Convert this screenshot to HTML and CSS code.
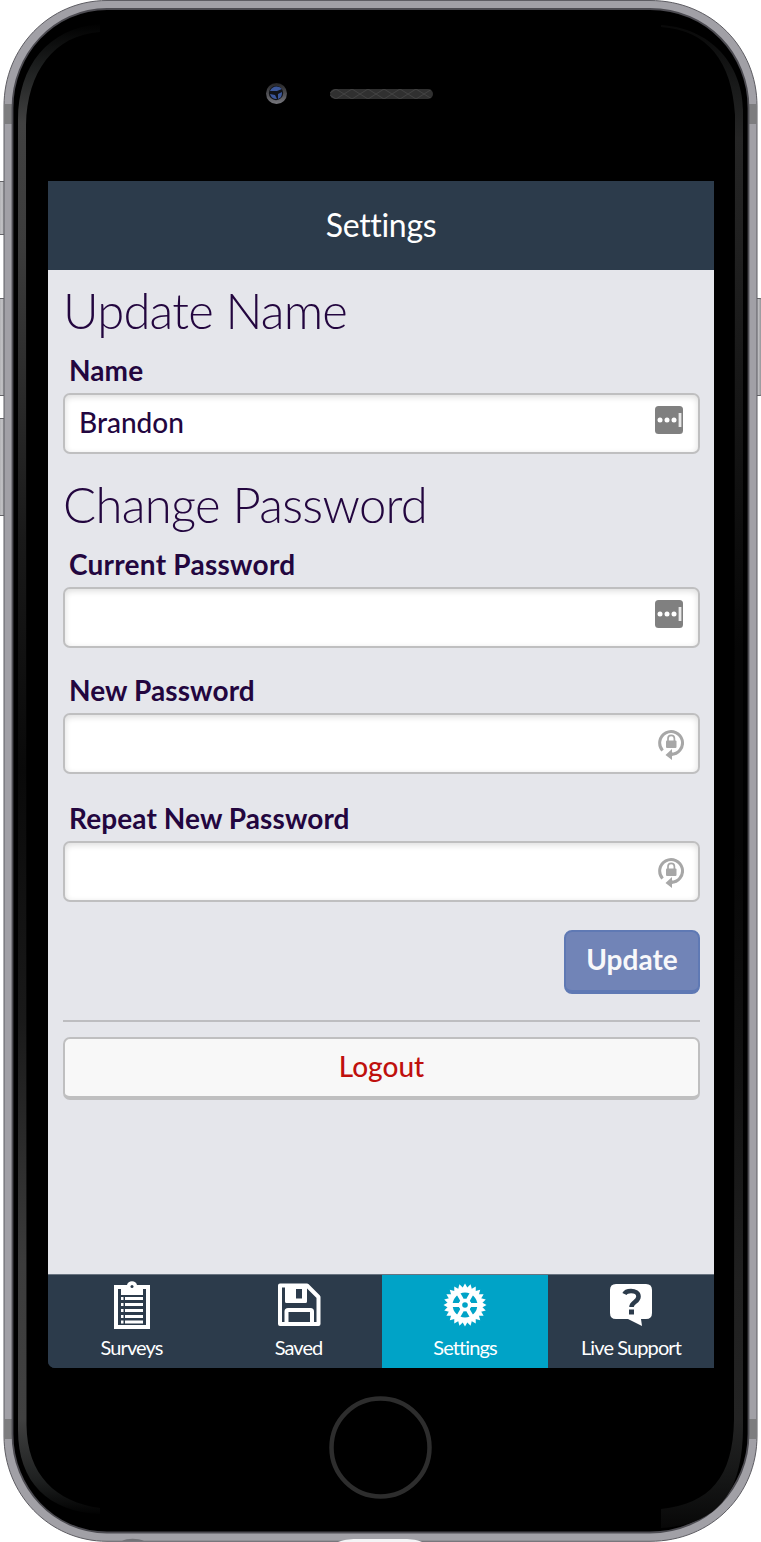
FILE: index.html
```html
<!DOCTYPE html>
<html lang="en">
<head>
<meta charset="utf-8">
<title>Settings</title>
<link rel="stylesheet" href="styles.css">
</head>
<body>
<div class="device">
  <svg class="frame" viewBox="0 0 761 1542" aria-hidden="true">
    <defs>
      <linearGradient id="glowL" x1="0" y1="0" x2="0" y2="1542" gradientUnits="userSpaceOnUse">
        <stop offset=".015" stop-color="#000"/><stop offset=".045" stop-color="#1e2020"/><stop offset=".08" stop-color="#414141"/>
        <stop offset=".16" stop-color="#3c3c3c"/><stop offset=".35" stop-color="#191919"/><stop offset=".5" stop-color="#090909"/>
        <stop offset=".66" stop-color="#191919"/><stop offset=".82" stop-color="#3c3c3c"/><stop offset=".92" stop-color="#414141"/>
        <stop offset=".96" stop-color="#1e2020"/><stop offset=".983" stop-color="#000"/>
      </linearGradient>
      <linearGradient id="glowR" x1="0" y1="0" x2="0" y2="1542" gradientUnits="userSpaceOnUse">
        <stop offset=".015" stop-color="#080808"/><stop offset=".06" stop-color="#1a1b1b"/><stop offset=".09" stop-color="#252525"/>
        <stop offset=".16" stop-color="#202020"/><stop offset=".3" stop-color="#121212"/><stop offset=".42" stop-color="#060606"/>
        <stop offset=".55" stop-color="#060606"/><stop offset=".7" stop-color="#121212"/><stop offset=".83" stop-color="#202020"/>
        <stop offset=".92" stop-color="#232323"/><stop offset=".96" stop-color="#151616"/><stop offset=".99" stop-color="#080808"/>
      </linearGradient>
      <linearGradient id="key" x1="0" x2="1" y1="0" y2="0"><stop offset="0" stop-color="#9b9b9f"/><stop offset=".5" stop-color="#c3c3c6"/><stop offset="1" stop-color="#77777b"/></linearGradient>
      <linearGradient id="lensRim" x1="0" x2="0" y1="0" y2="1"><stop offset="0" stop-color="#242426"/><stop offset="1" stop-color="#77777d"/></linearGradient>
      <pattern id="mesh" width="16" height="10" patternUnits="userSpaceOnUse" y="89"><path d="M0 0l16 10M16 0L0 10" stroke="#424242" stroke-width="1"/></pattern>
    </defs>
    <g fill="url(#key)" stroke="#646468" stroke-width="1">
      <rect x="-3" y="181.500" width="10" height="53" rx="3"/>
      <rect x="-3" y="298.500" width="10" height="97" rx="3"/>
      <rect x="-3" y="418.500" width="10" height="97" rx="3"/>
      <rect x="753" y="298.500" width="10" height="97" rx="3"/>
    </g>
    <path d="M107 .5H650C712 .5 757 48 757 106V1436C757 1494 712 1541.300 650 1541.300H107C49 1541.300 4 1494 4 1436V106C4 48 49 .5 107 .5Z" fill="#a1a0a6" stroke="#5d5c62"/>
    <path d="M4 104h9v20H4zM748 104h9v20h-9zM4 1419h9v20H4zM748 1419h9v20h-9z" fill="#7d7d7f"/>
    <path d="M107 9H650C707 9 748.500 54 748.500 108V1434C748.500 1488 707 1532.500 650 1532.500H107C54 1532.500 12.500 1488 12.500 1434V108C12.500 54 54 9 107 9Z" fill="#000" stroke="#4c4b51" stroke-width="1.800"/>
    <path d="M100 24C48 28 18 66 18 120V1430C18 1482 48 1512 100 1514V1508C56 1502 27 1475 26.500 1425L26 125C27 72 54 35 100 32Z" fill="url(#glowL)"/>
    <path d="M661 25C718 29 743 72 743 110V1423C744 1495 716 1525 661 1528V1509C710 1504 733 1477 734 1420L735 115C732 62 708 30 661 27Z" fill="url(#glowR)"/>
    <circle cx="276.500" cy="93.500" r="10.500" fill="url(#lensRim)"/>
    <circle cx="276" cy="93" r="7.200" fill="#111318"/>
    <path d="M270 91c2-5 8-6 12-2l-5 2zM270 94l5 1 2 4c-4 0-6-2-7-5zM278 94l4-2c0 4-1 6-4 7z" fill="#3b579a"/>
    <rect x="330" y="89" width="103" height="10" rx="5" fill="#303030"/>
    <rect x="330" y="89" width="103" height="10" rx="5" fill="url(#mesh)"/>
    <circle cx="380.500" cy="1447.500" r="49" fill="#000" stroke="#2d2d2d" stroke-width="4.500"/>
    <path d="M338 1542c8-3 14-3 20-3h44c7 0 13 0 20 3z" fill="#f4f4f6"/>
    <path d="M122 1541c5-3 16-3 22 0z" fill="#727277"/>
  </svg>

  <main class="screen">
    <header class="topbar">Settings</header>
    <form class="content">
      <h2 class="title">Update Name</h2>
      <label class="label" for="name">Name</label>
      <div class="field">
        <input class="input" id="name" type="text" value="Brandon">
        <svg class="manager" viewBox="0 0 28 28"><rect width="28" height="28" rx="3.500" fill="#808080"/><g fill="#fff"><circle cx="5" cy="14" r="2.500"/><circle cx="12" cy="14" r="2.500"/><circle cx="19" cy="14" r="2.500"/></g><path d="M25 7v14" stroke="#e9e9e9" stroke-width="2.800"/></svg>
      </div>
      <h2 class="title title-second">Change Password</h2>
      <label class="label label-current" for="current">Current Password</label>
      <div class="field">
        <input class="input" id="current" type="password">
        <svg class="manager" viewBox="0 0 28 28"><rect width="28" height="28" rx="3.500" fill="#808080"/><g fill="#fff"><circle cx="5" cy="14" r="2.500"/><circle cx="12" cy="14" r="2.500"/><circle cx="19" cy="14" r="2.500"/></g><path d="M25 7v14" stroke="#e9e9e9" stroke-width="2.800"/></svg>
      </div>
      <label class="label label-new" for="new">New Password</label>
      <div class="field">
        <input class="input" id="new" type="password">
        <svg class="generate" viewBox="0 0 26 33"><path d="M4.600 22.500A11.400 11.400 0 1 1 13 26.300" fill="none" stroke="#a7a7a7" stroke-width="3"/><path d="M7.500 27l6.500-6v3.500l3 1.500-3 2v4z" fill="#a7a7a7"/><rect x="8" y="12.500" width="10.500" height="7.500" rx="1" fill="#a7a7a7"/><path d="M10 13v-2.500a3.200 3.200 0 0 1 6.400 0V13" fill="none" stroke="#a7a7a7" stroke-width="1.700"/></svg>
      </div>
      <label class="label label-repeat" for="repeat">Repeat New Password</label>
      <div class="field">
        <input class="input" id="repeat" type="password">
        <svg class="generate" viewBox="0 0 26 33"><path d="M4.600 22.500A11.400 11.400 0 1 1 13 26.300" fill="none" stroke="#a7a7a7" stroke-width="3"/><path d="M7.500 27l6.500-6v3.500l3 1.500-3 2v4z" fill="#a7a7a7"/><rect x="8" y="12.500" width="10.500" height="7.500" rx="1" fill="#a7a7a7"/><path d="M10 13v-2.500a3.200 3.200 0 0 1 6.400 0V13" fill="none" stroke="#a7a7a7" stroke-width="1.700"/></svg>
      </div>
      <button class="update" type="button">Update</button>
      <hr class="rule">
      <button class="logout" type="button">Logout</button>
    </form>
    <nav class="tabs">
      <a class="tab"><svg class="icon" viewBox="0 0 44 50">
        <path d="M6 7h32v40H6z" fill="none" stroke="#fff" stroke-width="4"/>
        <path d="M11 9h5c1-2 1-3 1-4a5.200 5.200 0 0 1 10 0c0 1 0 2 1 4h5v6H11z" fill="#fff"/><circle cx="22" cy="6.500" r="1.500" fill="#2c3b4b"/>
        <path d="M11 18.500h22M11 24.500h22M11 30.500h22M11 36.500h22M11 42h22" stroke="#fff" stroke-width="2.800" stroke-dasharray="2.500 1.500 18"/>
      </svg><span class="tab-label">Surveys</span></a>
      <a class="tab"><svg class="icon" viewBox="0 0 44 50">
        <path d="M3 5.500h27L41.500 17v27H3z" fill="none" stroke="#fff" stroke-width="4" stroke-linejoin="round"/>
        <path d="M8 5h22v16.500q0 1.500-1.500 1.500h-19Q8 23 8 21.500zM19 9v9.500h6V9z" fill="#fff" fill-rule="evenodd"/>
        <path d="M9.500 44V31.500q0-1.500 1.500-1.500h22.500q1.500 0 1.500 1.500V44" fill="none" stroke="#fff" stroke-width="4"/>
      </svg><span class="tab-label">Saved</span></a>
      <a class="tab tab-active"><svg class="icon" viewBox="0 0 44 50">
        <defs><path id="tri" d="M0-21.500L18.620 10.750H-18.620Z"/></defs>
        <g transform="translate(22 25)" fill="#fff">
          <use href="#tri"/><use href="#tri" transform="rotate(15)"/><use href="#tri" transform="rotate(30)"/><use href="#tri" transform="rotate(45)"/><use href="#tri" transform="rotate(60)"/><use href="#tri" transform="rotate(75)"/><use href="#tri" transform="rotate(90)"/><use href="#tri" transform="rotate(105)"/>
          <circle r="9.300" fill="none" stroke="#00a3c7" stroke-width="6.200"/>
          <path d="M-14 0h28M-7-12.100L7 12.100M7-12.100L-7 12.100" stroke="#fff" stroke-width="4"/>
          <circle r="6.300"/><circle r="2.800" fill="#00a3c7"/>
        </g>
      </svg><span class="tab-label">Settings</span></a>
      <a class="tab"><svg class="icon" viewBox="0 0 44 50">
        <path d="M7 4h30q6 0 6 6v23q0 6-6 6h-5l1 7-14-7H7q-6 0-6-6V10q0-6 6-6z" fill="#fff"/>
        <path d="M15.500 14c1-2.400 3.500-3 6.500-3 4 0 7.500 1.800 7.500 5.500 0 5.500-7 5.500-7 10.500" fill="none" stroke="#2c3b4b" stroke-width="4.600"/><path d="M20 29.500h5v5h-5z" fill="#2c3b4b"/>
      </svg><span class="tab-label">Live Support</span></a>
    </nav>
  </main>
</div>
</body>
</html>
```
FILE: styles.css
```css
* { box-sizing: border-box; }
body { margin: 0; background: #fff; font-family: Lato, "Liberation Sans", sans-serif; font-variant-ligatures: none; }
.device { display: grid; width: 761px; height: 1542px; overflow: hidden; }
.frame { grid-area: 1 / 1; width: 761px; height: 1542px; }
.screen {
  grid-area: 1 / 1; z-index: 1; width: 666px; height: 1187px; margin: 181px 0 0 48px;
  display: flex; flex-direction: column; background: #2c3b4b; color: #23063f;
  border-bottom-left-radius: 7px; overflow: hidden;
}
.topbar { height: 89px; flex: none; background: #2c3b4b; color: #fff; font-size: 32px; line-height: 87px; letter-spacing: -.3px; text-align: center; }
.content { flex: 1; display: flex; flex-direction: column; padding: 15px 14px 0 15px; background: #e5e6eb; }
.title { margin: 0; font-size: 49px; font-weight: 300; line-height: 50px; letter-spacing: -.8px; white-space: nowrap; }
.title-second { margin-top: 25px; letter-spacing: -.7px; }
.label { margin: 15px 0 3px 6px; font-size: 28px; font-weight: 700; line-height: 40px; letter-spacing: .1px; }
.label-current { letter-spacing: .25px; }
.label-new { margin-top: 22px; }
.label-repeat { margin-top: 24px; }
.field {
  display: flex; justify-content: space-between; height: 61px; padding: 0 15px 0 14px;
  background: #fff; border: 2px solid #bfbfc0; border-radius: 7px; box-shadow: inset 0 2px 6px rgba(0, 0, 0, .14);
}
.input { flex: 1; min-width: 0; height: 55px; border: 0; padding: 0; outline: 0; background: none; color: inherit; font: 500 28px/55px Lato, sans-serif; }
.manager { width: 28px; height: 28px; margin-top: 11px; }
.generate { width: 26px; height: 33px; margin: 13px -1px 0 0; }
.update {
  align-self: flex-end; width: 136px; height: 64px; margin-top: 28px; padding: 0 0 4px;
  border: 2px solid #5f79b4; border-bottom-width: 4px; border-radius: 8px; background: #7184b7;
  color: #f8f8fa; font: 700 28px/54px Lato, sans-serif;
}
.rule { width: 100%; height: 2px; margin: 26px 0 15px; border: 0; background: #bdbdc0; }
.logout {
  height: 63px; padding: 0 0 2px; border: 2px solid #bfbfc0; border-bottom-width: 4px; border-radius: 7px;
  background: #f8f8f8; color: #bf100d; font: 500 28px/55px Lato, sans-serif;
}
.tabs { flex: none; display: grid; grid-template-columns: 167px 167px 166px 166px; height: 94px; background: #2c3b4b; border-top: 1px solid #687380; }
.tab { display: flex; flex-direction: column; align-items: center; padding-top: 5px; color: #fff; }
.tab-active { background: #00a3c7; }
.icon { width: 44px; height: 50px; }
.tab-label { margin-top: 4px; font-size: 20px; line-height: 26px; letter-spacing: -.9px; white-space: nowrap; }
```
